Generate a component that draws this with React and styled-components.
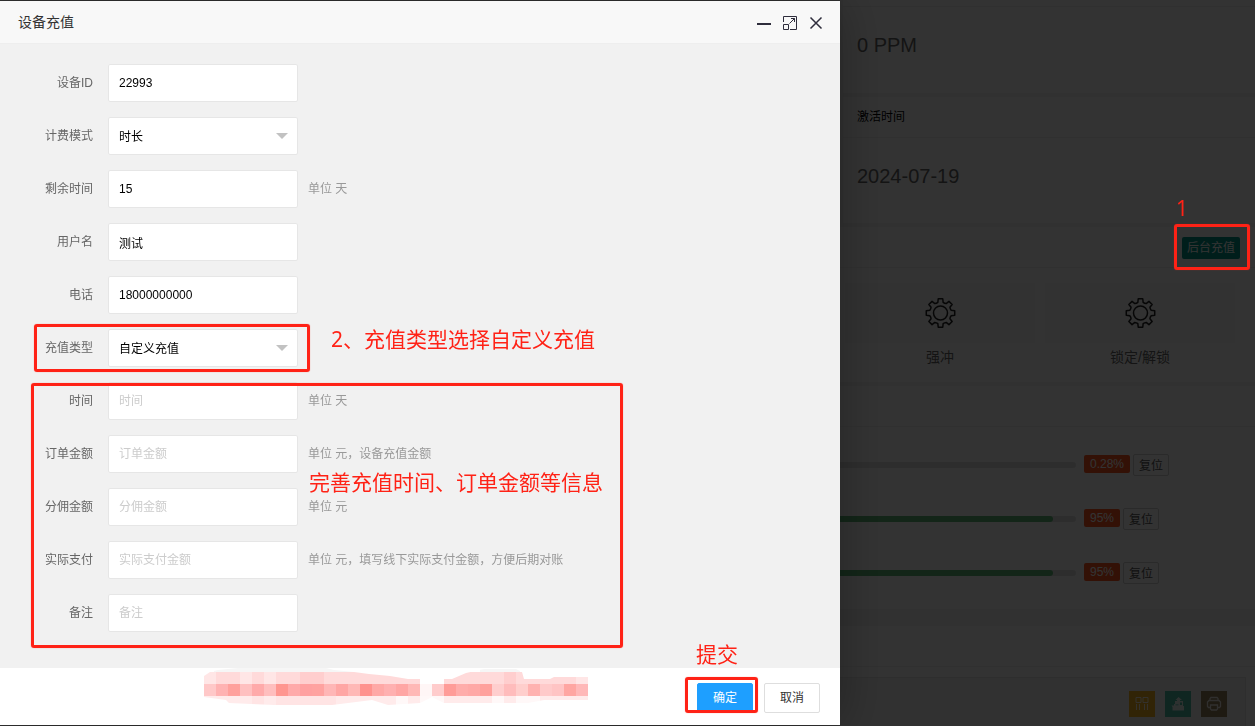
import React from "react";
import styled, { createGlobalStyle, css } from "styled-components";

const GlobalStyle = createGlobalStyle`
	* {
		box-sizing: border-box;
	}

	body {
		background: #fff;
		color: #333;
		font: 12px/1.5 "Liberation Sans", "Noto Sans CJK SC", sans-serif;
		height: 726px;
		margin: 0;
		overflow: hidden;
	}
`;

/* Page behind the dialog */

const Page = styled.main`
	background: #f2f2f2;
	height: 726px;
	overflow: hidden;
	padding-left: 840px;
`;

const Card = styled.section`
	background: #fff;
	height: ${(props) => props.$height}px;
	margin-bottom: ${(props) => props.$gap || 4}px;
	margin-left: ${(props) => props.$inset || 0}px;
`;

const CardHeader = styled.header`
	align-items: center;
	border-bottom: 1px solid #f0f0f0;
	color: #000;
	display: flex;
	height: ${(props) => props.$height || 41}px;
	justify-content: space-between;
	padding: 0 15px 0 14px;
`;

const CardValue = styled.p`
	color: #666;
	font-size: 20px;
	line-height: 30px;
	margin: 0;
	padding: ${(props) => props.$top}px 14px 0;
`;

const RechargeButton = styled.button`
	background: #009688;
	border: 0;
	border-radius: 2px;
	color: #fff;
	font: inherit;
	height: 22px;
	line-height: 20px;
	margin: 2px 0 0 auto;
	padding: 0;
	width: 58px;
`;

const Tiles = styled.div`
	display: flex;
	gap: 10px;
	padding: 15px 5px;
`;

const Tile = styled.div`
	text-align: center;
	width: 190px;
`;

const TileIcon = styled.div`
	align-items: center;
	background: #f8f8f8;
	color: #222;
	display: flex;
	height: 60px;
	justify-content: center;
`;

const TileName = styled.div`
	color: #666;
	font-size: 14px;
	line-height: 28px;
`;

const Progress = styled.div`
	display: flex;
	height: 54px;
	padding-top: 27px;
`;

const Track = styled.div`
	background: #e2e2e2;
	border-radius: 0 6px 6px 0;
	height: 6px;
	margin: 8px 8px 0 0;
	width: 236px;
`;

const Bar = styled.div`
	background: #5fb878;
	border-radius: 0 6px 6px 0;
	height: 6px;
`;

const Badge = styled.span`
	background: #ff5722;
	border-radius: 2px;
	color: #fff;
	height: 18px;
	line-height: 18px;
	margin: 1px 3px 0 0;
	padding: 0 6px;
`;

const ResetButton = styled.button`
	background: #fff;
	border: 1px solid #d2d2d2;
	border-radius: 2px;
	color: #555;
	font: inherit;
	height: 22px;
	line-height: 20px;
	padding: 1px 0 0;
	width: 36px;
`;

const TableTools = styled.div`
	background: #f2f2f2;
	border: 1px solid #e6e6e6;
	border-width: 1px 1px 0 0;
	display: flex;
	gap: 10px;
	height: 50px;
	justify-content: flex-end;
	margin: 10px 9px 0 0;
	padding: 13px 18px;
`;

const Tool = styled.span`
	align-items: center;
	background: ${(props) => props.$color};
	color: rgba(255, 255, 255, 0.85);
	display: flex;
	height: 26px;
	justify-content: center;
	width: 26px;
`;

const Shade = styled.div`
	background: rgba(0, 0, 0, 0.8);
	inset: 0;
	position: fixed;
`;

/* Dialog */

const Dialog = styled.section`
	background: #f1f1f1;
	border-radius: 2px;
	box-shadow: 1px 1px 50px rgba(0, 0, 0, 0.3);
	display: flex;
	flex-direction: column;
	height: 724px;
	left: 0;
	position: fixed;
	top: 1px;
	width: 840px;
`;

const DialogHeader = styled.header`
	align-items: center;
	background: #f8f8f8;
	border-bottom: 1px solid #eee;
	display: flex;
	flex: none;
	font-size: 14px;
	height: 43px;
	justify-content: space-between;
	padding: 0 17px 0 18px;
`;

const DialogControls = styled.div`
	color: #2e2d3c;
	display: flex;
	gap: 11px;
	padding-top: 2px;
`;

const Form = styled.form`
	display: flex;
	flex: 1;
	flex-direction: column;
	gap: 15px;
	padding: 20px 0 0 28px;
`;

const FormRow = styled.div`
	display: flex;
	height: 38px;
`;

const Label = styled.label`
	color: #666;
	line-height: 38px;
	padding-right: 15px;
	text-align: right;
	width: 80px;
`;

const field = css`
	background: #fff;
	border: 1px solid #e6e6e6;
	border-radius: 2px;
	color: #000;
	font: inherit;
	height: 38px;
	padding: 0 10px;
	width: 190px;
`;

const Input = styled.input`
	${field}

	&::placeholder {
		color: #ccc;
		opacity: 1;
	}
`;

const Select = styled.div`
	${field}
	align-items: center;
	display: flex;
	justify-content: space-between;
	padding: 2px 9px 0 10px;

	&::after {
		border: 6px solid transparent;
		border-bottom: 0;
		border-top-color: #c2c2c2;
		content: "";
		margin-bottom: 2px;
	}
`;

const Hint = styled.span`
	color: #999;
	line-height: 38px;
	margin-left: 10px;
`;

const DialogFooter = styled.footer`
	align-items: flex-start;
	background: #fff;
	display: flex;
	flex: none;
	gap: 11px;
	height: 57px;
	justify-content: flex-end;
	padding: 15px 20px 0;
`;

const DialogButton = styled.button`
	background: ${(props) => (props.$primary ? "#1e9fff" : "#fff")};
	border: 1px solid ${(props) => (props.$primary ? "#1e9fff" : "#dedede")};
	border-radius: 2px;
	color: ${(props) => (props.$primary ? "#fff" : "#333")};
	font: inherit;
	height: 30px;
	line-height: 28px;
	padding: 0;
	width: 56px;
`;

/* Notes drawn over the page */

const Mark = styled.div`
	border: 3px solid #ff2216;
	border-radius: 3px;
	box-shadow: 0 0 1px rgba(255, 34, 22, 0.6);
	height: ${(props) => props.$h}px;
	left: ${(props) => props.$x}px;
	position: fixed;
	top: ${(props) => props.$y}px;
	width: ${(props) => props.$w}px;
`;

const Note = styled.div`
	color: #ff2216;
	font-family: "Noto Sans", "Noto Sans CJK SC", sans-serif;
	font-size: 21px;
	left: ${(props) => props.$x}px;
	line-height: 30px;
	position: fixed;
	top: ${(props) => props.$y}px;
	white-space: nowrap;
`;

const Mosaic = styled.svg`
	left: 204px;
	position: fixed;
	top: 667px;
`;

const toothAngles = [0, 45, 90, 135, 180, 225, 270, 315];

const GearIcon = () => {
	const point = (radius, angle) => {
		const rad = (angle * Math.PI) / 180;
		return `${(16.5 + radius * Math.sin(rad)).toFixed(2)} ${(16 - radius * Math.cos(rad)).toFixed(2)}`;
	};
	const d = toothAngles
		.map((a) => `${point(14.4, a - 9)} L${point(14.4, a + 9)} L${point(11, a + 14)} A5 5 0 0 0 ${point(11, a + 31)}`)
		.join(" L");
	return (
		<svg width="32" height="32" viewBox="0 0 32 32" fill="none" stroke="currentColor" strokeWidth="1.5" strokeLinejoin="round">
			<path d={`M${d} Z`} />
			<circle cx="16.5" cy="16" r="7" />
		</svg>
	);
};

const ColumnsIcon = () => (
	<svg width="14" height="14" viewBox="0 0 14 14" fill="none" stroke="currentColor">
		<path d="M1 .5h5v5H1zM8 .5h5v5H8zM1.5 7v6M4.5 7v6M9.5 7v6M12.5 7v6" />
	</svg>
);

const ExportIcon = () => (
	<svg width="14" height="14" viewBox="0 0 14 14" fill="currentColor">
		<path
			fillRule="evenodd"
			d="M7.5 0L11 3H9v1h3v5h1v4.500H1.500V10L.5 8.500H3V7h1V4h2V3H4.500zM9 5.500V8h2V5.500zM4.500 7.500h3v.8h-3z"
		/>
	</svg>
);

const PrintIcon = () => (
	<svg width="16" height="16" viewBox="0 0 16 16" fill="none" stroke="currentColor" strokeWidth="1.3">
		<path d="M4 4.500V2.500L5 1.500h6l1 1v2M4 11.500H2.500L1.500 10.500V6L3 4.500h10L14.500 6v4.500l-1 1H12M4.500 9h7v4l-1 1h-5l-1-1z" />
	</svg>
);

const MinimizeIcon = () => (
	<svg width="14" height="16" fill="none" stroke="currentColor" strokeWidth="2">
		<path d="M0 9h14" />
	</svg>
);

const MaximizeIcon = () => (
	<svg width="16" height="16" fill="none" stroke="currentColor">
		<path d="M1.5 7V1.500h13v13H8M1.500 9.500h5v5h-5zM7.500 8.500l5-5M9 3.500h3.500V7" />
	</svg>
);

const CloseIcon = () => (
	<svg width="14" height="16" fill="none" stroke="currentColor" strokeWidth="1.5">
		<path d="M1.500 2.500l11 11M12.500 2.500l-11 11" />
	</svg>
);

const progress = [
	{ value: "0.28%", width: 0 },
	{ value: "95%", width: 213 },
	{ value: "95%", width: 213 },
];

const rows = [
	{ label: "设备ID", value: "22993" },
	{ label: "计费模式", value: "时长", select: true },
	{ label: "剩余时间", value: "15", hint: "单位 天" },
	{ label: "用户名", value: "测试" },
	{ label: "电话", value: "18000000000" },
	{ label: "充值类型", value: "自定义充值", select: true },
	{ label: "时间", placeholder: "时间", hint: "单位 天" },
	{ label: "订单金额", placeholder: "订单金额", hint: "单位 元，设备充值金额" },
	{ label: "分佣金额", placeholder: "分佣金额", hint: "单位 元" },
	{ label: "实际支付", placeholder: "实际支付金额", hint: "单位 元，填写线下实际支付金额，方便后期对账" },
	{ label: "备注", placeholder: "备注" },
];

// the outer rows hold one shade index per 12px cell
const mosaicTop = "12212122332222222220222223222221";
const mosaicBottom = "11112122222111110100111101001111";
const mosaicMiddle = [
	"#ffc8c8", "#ffb2b2", "#ffa09c", "#ffc0c0", "#ffaaaa", "#ffbebe", "#ff9690", "#ffaaaa",
	"#ffa0a0", "#ffa2a0", "#ffb6b6", "#ffa6a4", "#ffb8b6", "#ff928e", "#ffa8a6", "#ffb0b0",
	"#ffa6a4", "#ffb8b6", "#fff6f6", "#ffcccc", "#ff9c98", "#ffacaa", "#ffa8a6", "#ffa09c",
	"#ffcece", "#ffbcbc", "#ffcecc", "#ffb2b0", "#ffcaca", "#ffc4c4", "#ffa6a2", "#ffb8b8",
];
const topShades = ["#fff", "#ffe6e6", "#ffdada", "#ffcece"];
const bottomShades = ["#fff8f8", "#ffebeb", "#ffe4e4"];

const MosaicStrip = () => (
	<Mosaic width="384" height="40" viewBox="0 0 384 40" shapeRendering="crispEdges">
		<clipPath id="brush">
			<path d="M0 9L6 5 14 3 34 1H122L130 3 150 5 165 7 186 9 204 12 216 12V36L184 38 168 33 128 38H70L25 36 22 33 0 30zM216 17H228V30L216 36zM228 12H248L262 6 280 2H312L318 5 320 12H346L350 10H384V33H340L324 36H240L228 30z" />
		</clipPath>
		<g clipPath="url(#brush)">
			<path d="M10 0h145v5H10zM276 0h40v5h-40z" fill="#f6f6f6" />
			{mosaicMiddle.map((color, i) => (
				<React.Fragment key={i}>
					<rect x={i * 12} y="5" width="12" height="12" fill={topShades[mosaicTop[i]]} />
					<rect x={i * 12} y="17" width="12" height="12" fill={color} />
					<rect x={i * 12} y="29" width="12" height="12" fill={bottomShades[mosaicBottom[i]]} />
				</React.Fragment>
			))}
		</g>
	</Mosaic>
);

const Background = () => (
	<Page>
		<Card $height={93} $inset={3}>
			<CardHeader $height={7} />
			<CardValue $top={23}>0 PPM</CardValue>
		</Card>
		<Card $height={126} $inset={3}>
			<CardHeader>激活时间</CardHeader>
			<CardValue $top={23}>2024-07-19</CardValue>
		</Card>
		<Card $height={155}>
			<CardHeader>
				<RechargeButton>后台充值</RechargeButton>
			</CardHeader>
			<Tiles>
				{["强冲", "锁定/解锁"].map((name) => (
					<Tile key={name}>
						<TileIcon>
							<GearIcon />
						</TileIcon>
						<TileName>{name}</TileName>
					</Tile>
				))}
			</Tiles>
		</Card>
		<Card $height={223} $gap={17}>
			<CardHeader />
			{progress.map(({ value, width }, i) => (
				<Progress key={i}>
					<Track>
						<Bar style={{ width }} />
					</Track>
					<Badge>{value}</Badge>
					<ResetButton>复位</ResetButton>
				</Progress>
			))}
		</Card>
		<Card $height={100}>
			<CardHeader />
			<TableTools>
				<Tool $color="#f4b420">
					<ColumnsIcon />
				</Tool>
				<Tool $color="#4cbca4">
					<ExportIcon />
				</Tool>
				<Tool $color="#96825c">
					<PrintIcon />
				</Tool>
			</TableTools>
		</Card>
	</Page>
);

const App = () => (
	<>
		<GlobalStyle />
		<Background />
		<Shade />
		<Dialog>
			<DialogHeader>
				设备充值
				<DialogControls>
					<MinimizeIcon />
					<MaximizeIcon />
					<CloseIcon />
				</DialogControls>
			</DialogHeader>
			<Form>
				{rows.map(({ label, value, placeholder, select, hint }) => (
					<FormRow key={label}>
						<Label>{label}</Label>
						{select ? <Select>{value}</Select> : <Input defaultValue={value} placeholder={placeholder} />}
						{hint && <Hint>{hint}</Hint>}
					</FormRow>
				))}
			</Form>
			<DialogFooter>
				<DialogButton $primary>确定</DialogButton>
				<DialogButton>取消</DialogButton>
			</DialogFooter>
		</Dialog>
		<MosaicStrip />
		<Mark $x={1174} $y={224} $w={76} $h={46} />
		<Mark $x={34} $y={324} $w={276} $h={48} />
		<Mark $x={31} $y={383} $w={592} $h={265} />
		<Mark $x={685} $y={677} $w={73} $h={36} />
		<Note $x={1176} $y={193}>1</Note>
		<Note $x={331} $y={324}>2、充值类型选择自定义充值</Note>
		<Note $x={309} $y={467}>完善充值时间、订单金额等信息</Note>
		<Note $x={696} $y={639}>提交</Note>
	</>
);

export default App;
